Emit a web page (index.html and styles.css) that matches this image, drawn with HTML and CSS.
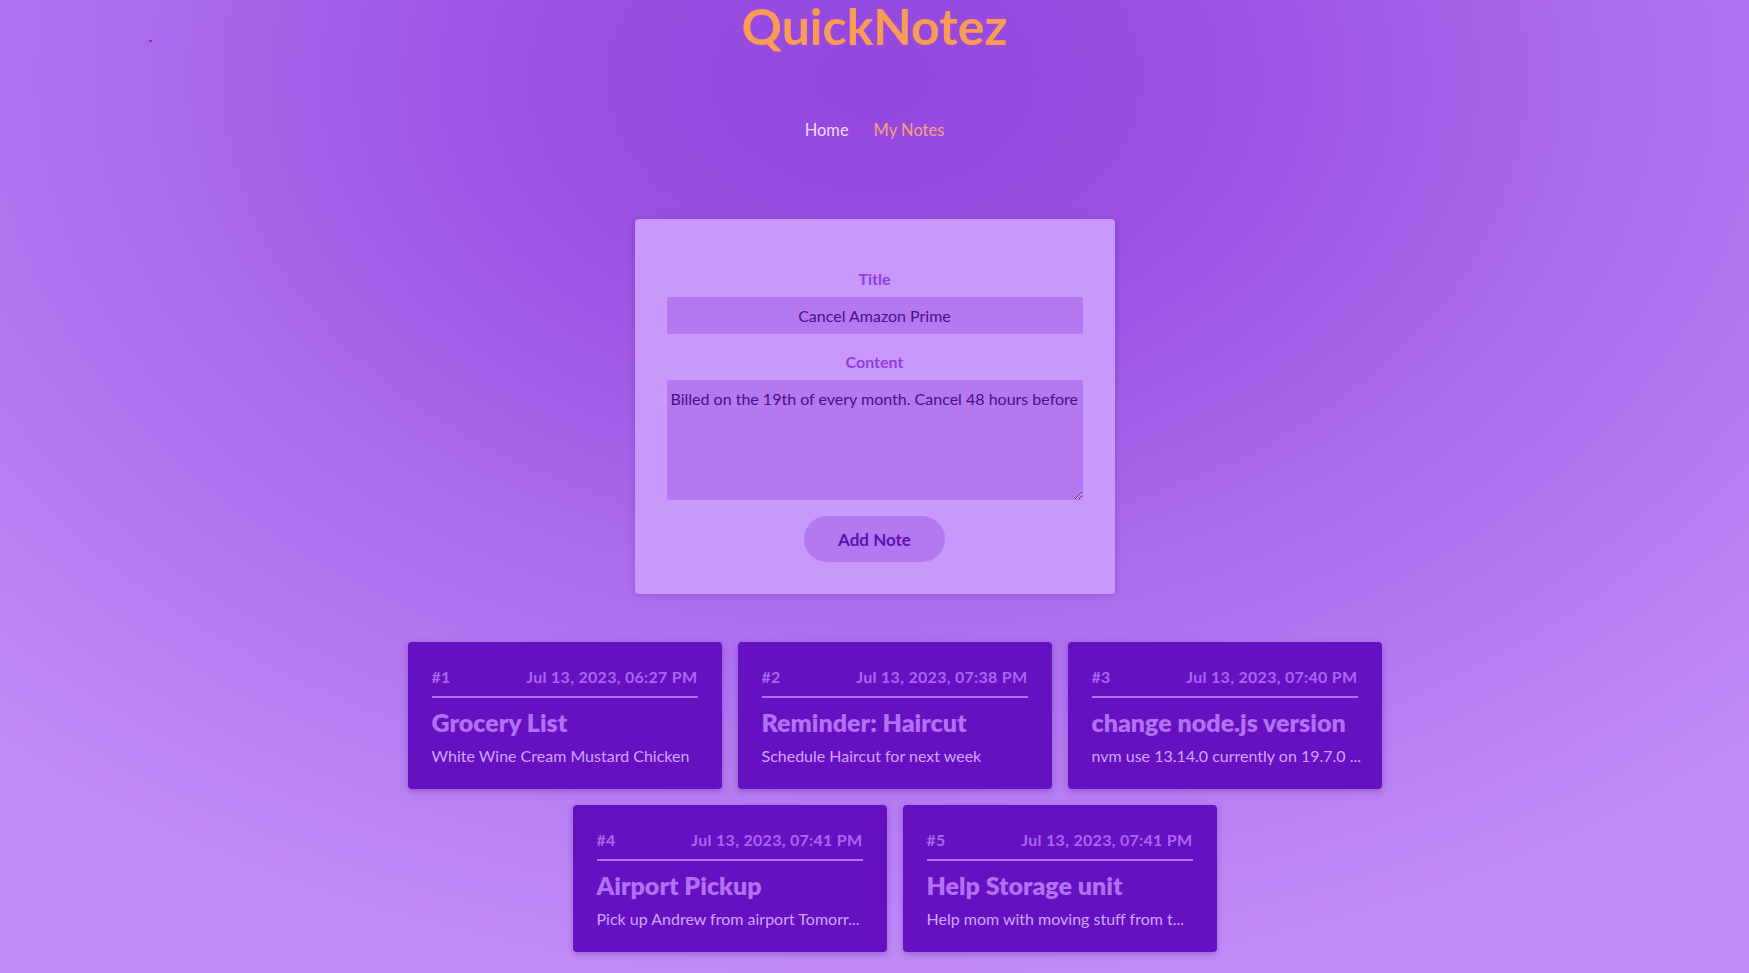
FILE: index.html
```html
<!DOCTYPE html>
<html lang="en">
<head>
<meta charset="utf-8">
<title>QuickNotez</title>
<link rel="stylesheet" href="styles.css">
</head>
<body>
<span class="dot"></span>
<header class="header">
  <h1 class="logo">QuickNotez</h1>
  <nav class="nav">
    <a class="nav-link" href="#">Home</a>
    <a class="nav-link active" href="#">My Notes</a>
  </nav>
</header>
<main class="main">
  <form class="note-form">
    <label class="form-label" for="title">Title</label>
    <input class="form-input" id="title" type="text" value="Cancel Amazon Prime">
    <label class="form-label" for="content">Content</label>
    <textarea class="form-textarea" id="content">Billed on the 19th of every month. Cancel 48 hours before</textarea>
    <button class="form-button" type="button">Add Note</button>
  </form>
  <ul class="notes">
    <li class="note">
      <div class="note-head"><span>#1</span><span>Jul 13, 2023, 06:27 PM</span></div>
      <h2 class="note-title">Grocery List</h2>
      <p class="note-text">White Wine Cream Mustard Chicken</p>
    </li>
    <li class="note">
      <div class="note-head"><span>#2</span><span>Jul 13, 2023, 07:38 PM</span></div>
      <h2 class="note-title">Reminder: Haircut</h2>
      <p class="note-text">Schedule Haircut for next week</p>
    </li>
    <li class="note">
      <div class="note-head"><span>#3</span><span>Jul 13, 2023, 07:40 PM</span></div>
      <h2 class="note-title">change node.js version</h2>
      <p class="note-text">nvm use 13.14.0 currently on 19.7.0 ...</p>
    </li>
    <li class="note">
      <div class="note-head"><span>#4</span><span>Jul 13, 2023, 07:41 PM</span></div>
      <h2 class="note-title">Airport Pickup</h2>
      <p class="note-text">Pick up Andrew from airport Tomorr...</p>
    </li>
    <li class="note">
      <div class="note-head"><span>#5</span><span>Jul 13, 2023, 07:41 PM</span></div>
      <h2 class="note-title">Help Storage unit</h2>
      <p class="note-text">Help mom with moving stuff from t...</p>
    </li>
  </ul>
</main>
</body>
</html>
```
FILE: styles.css
```css
* { box-sizing: border-box; }

html, body { height: 100%; }

body {
  margin: 0;
  min-height: 100%;
  font-family: "Lato", "Open Sans", sans-serif;
  background: radial-gradient(ellipse 75% 95% at 50% 8%, #9447df 0%, #9a50e2 25%, #aa6bec 55%, #c28cf8 100%);
  background-attachment: fixed;
  overflow: hidden;
}

.dot {
  position: absolute;
  left: 149px;
  top: 40px;
  width: 3px;
  height: 2px;
  background: #c8205e;
}

.header {
  display: flex;
  flex-direction: column;
  align-items: center;
}

.logo {
  margin: 0;
  font-size: 50px;
  line-height: 52px;
  font-weight: 700;
  color: #f89c55;
}

.nav {
  display: flex;
  gap: 25px;
  margin-top: 68px;
}

.nav-link {
  font-size: 16.5px;
  color: #f0dcff;
  text-decoration: none;
}

.nav-link.active { color: #f5a27a; }

.main {
  display: flex;
  flex-direction: column;
  align-items: center;
  margin-top: 79px;
}

.note-form {
  width: 480px;
  padding: 50px 32px 32px;
  background: #c898fa;
  border-radius: 4px;
  box-shadow: 0 1px 6px rgba(80, 20, 150, 0.25);
  display: flex;
  flex-direction: column;
  align-items: center;
}

.form-label {
  font-size: 16px;
  font-weight: 700;
  color: #8f3fe0;
  margin-bottom: 9px;
}

.form-input,
.form-textarea {
  width: 100%;
  border: none;
  border-radius: 2px;
  background: #b478f0;
  color: #4a0f86;
  font-family: inherit;
  font-size: 16px;
  outline: none;
}

.form-input {
  height: 37px;
  text-align: center;
  margin-bottom: 18px;
}

.form-textarea {
  height: 120px;
  padding: 9px 4px;
  resize: vertical;
  margin-bottom: 16px;
  line-height: 20px;
}

.form-button {
  width: 141px;
  height: 46px;
  border: none;
  border-radius: 23px;
  background: #b478f0;
  color: #5a12b0;
  font-family: inherit;
  font-size: 17px;
  font-weight: 700;
}

.notes {
  list-style: none;
  margin: 48px 0 0;
  padding: 0 0 0 40px;
  width: 1080px;
  display: flex;
  flex-wrap: wrap;
  justify-content: center;
  gap: 16px 16px;
}

.note {
  width: 314px;
  height: 147px;
  padding: 25px 24px 0;
  background: #6511c2;
  border-radius: 4px;
  box-shadow: 0 2px 6px rgba(60, 10, 120, 0.3);
}

.note-head {
  display: flex;
  justify-content: space-between;
  font-size: 16px;
  line-height: 20px;
  letter-spacing: 0.3px;
  font-weight: 700;
  color: #aa66ee;
  padding-bottom: 9px;
  border-bottom: 2px solid #b06ef2;
}

.note-title {
  margin: 9px 0 0;
  font-size: 25px;
  line-height: 30px;
  font-weight: 800;
  color: #b270f2;
}

.note-text {
  margin: 9px 0 0;
  font-size: 16px;
  line-height: 20px;
  color: #d2a4ff;
  white-space: nowrap;
}
```
